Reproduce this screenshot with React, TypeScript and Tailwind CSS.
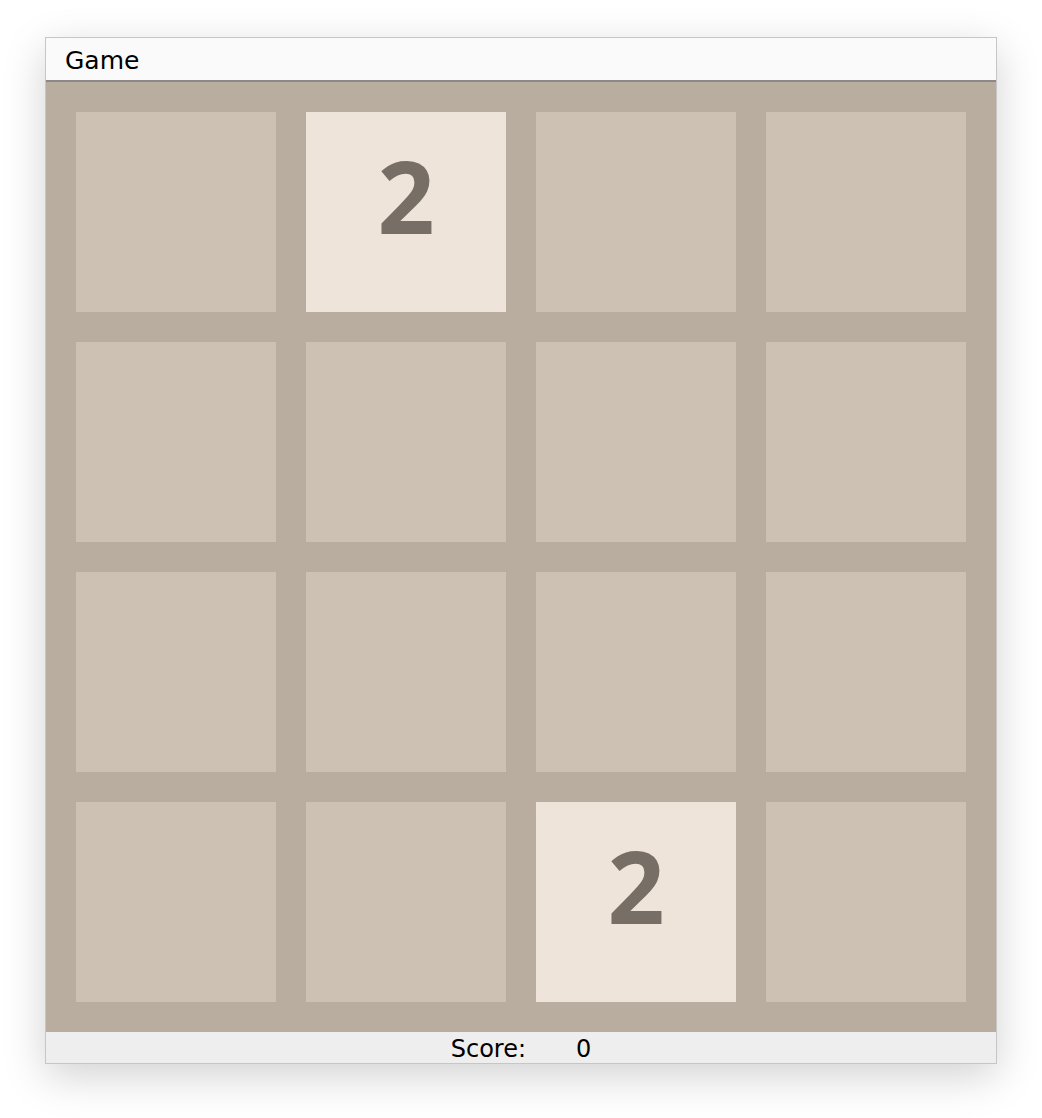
import React from "react";

const board: number[][] = [
  [0, 2, 0, 0],
  [0, 0, 0, 0],
  [0, 0, 0, 0],
  [0, 0, 2, 0],
];

function Tile({ value }: { value: number }) {
  if (!value) {
    return <div className="h-[200px] w-[200px] bg-[#cdc1b3]" />;
  }
  return (
    <div className="flex h-[200px] w-[200px] items-center justify-center bg-[#eee4da] pb-[34px]">
      <span
        className="text-[100px] font-bold leading-none text-[#776e65]"
        style={{ fontFamily: '"Open Sans", sans-serif' }}
      >
        {value}
      </span>
    </div>
  );
}

export default function App() {
  return (
    <div className="min-h-screen bg-white pl-[45px] pt-[37px]" style={{ fontFamily: '"DejaVu Sans", sans-serif' }}>
      <div className="w-[952px] border border-[#c6c6c6] shadow-[0_12px_40px_rgba(0,0,0,0.18)]">
        {/* menu bar */}
        <div className="flex h-[42px] items-center bg-[#fafafa] pl-[19px] pt-[3px] text-[25px] text-black">
          Game
        </div>
        <div className="h-[2px] bg-[#8c8888]" />
        {/* board */}
        <div className="grid grid-cols-4 gap-[30px] bg-[#b9ad9f] p-[30px]">
          {board.flat().map((v, i) => (
            <Tile key={i} value={v} />
          ))}
        </div>
        {/* status bar */}
        <div className="flex h-[31px] items-center justify-center gap-[50px] bg-[#eeeeee] pt-[3px] text-[24px] text-black">
          <span>Score:</span>
          <span>0</span>
        </div>
      </div>
    </div>
  );
}
